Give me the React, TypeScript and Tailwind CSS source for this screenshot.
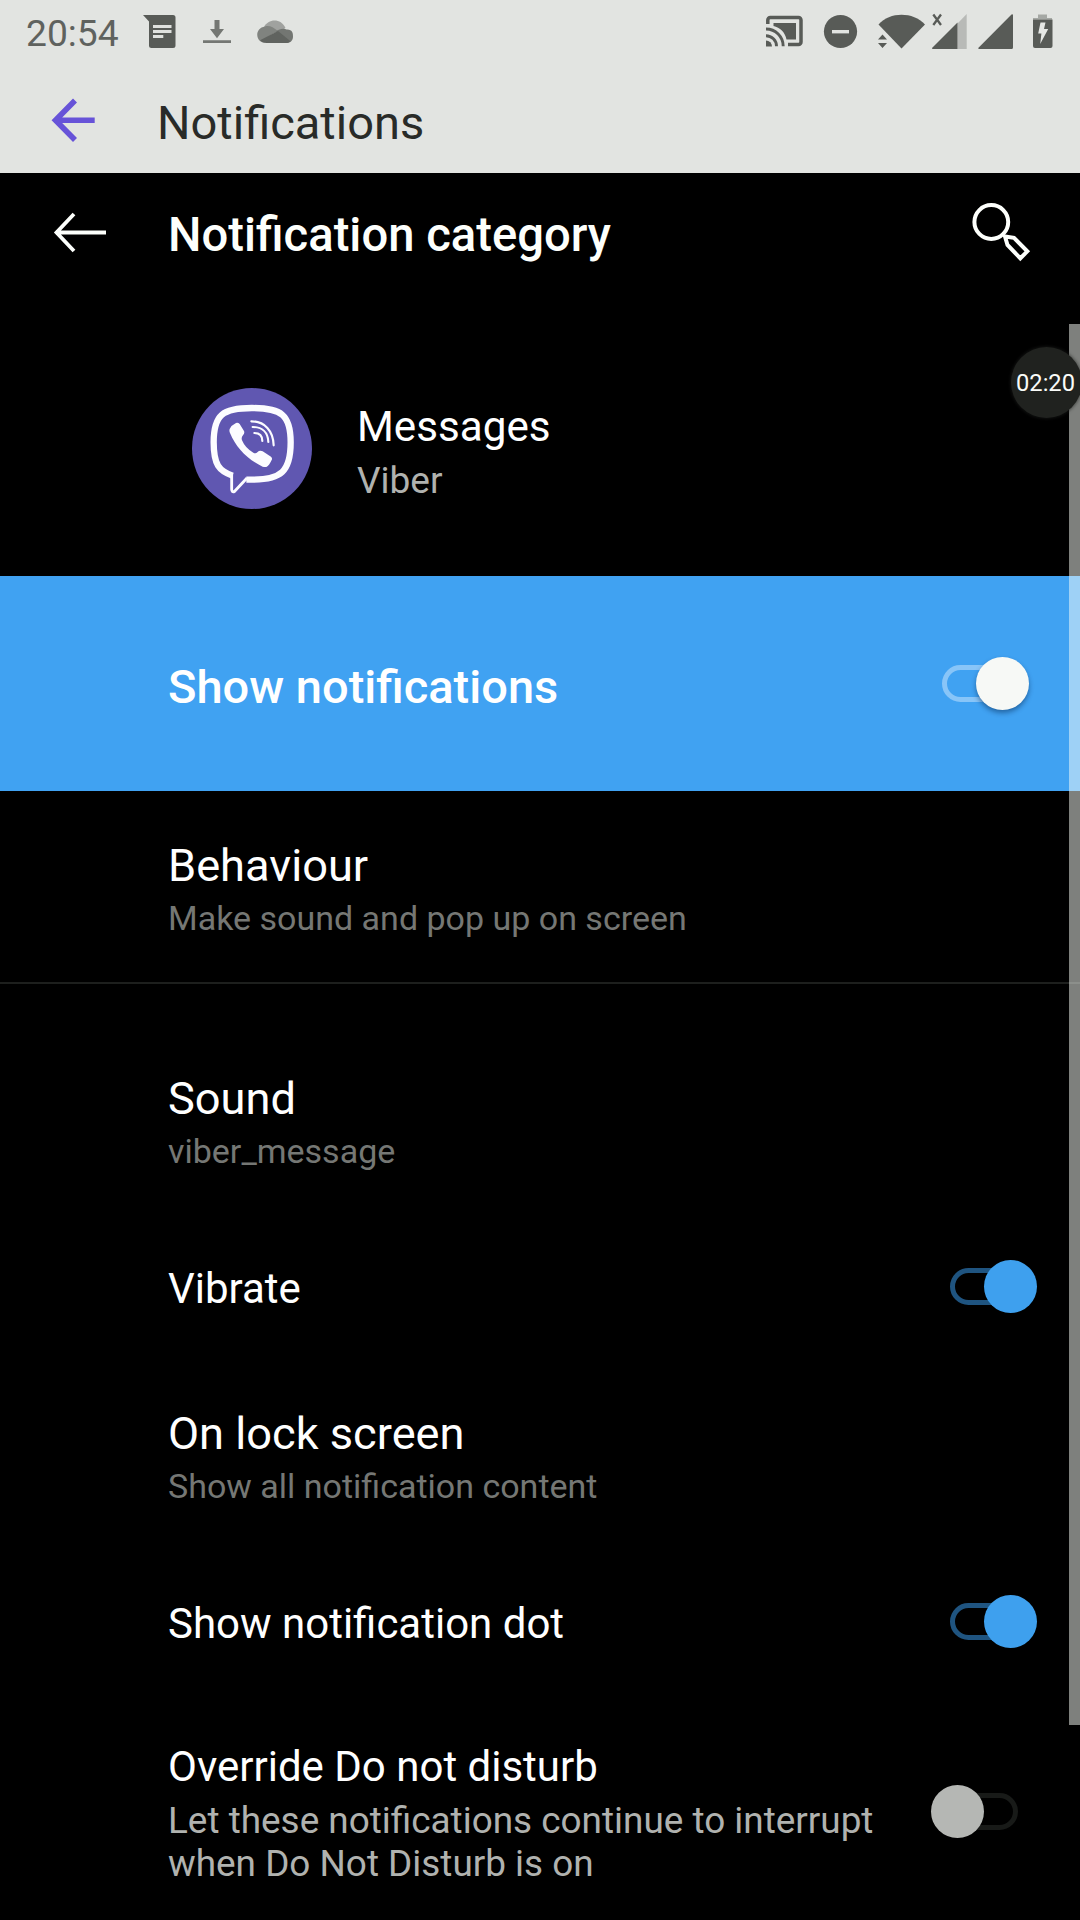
import type { ReactNode } from "react";

function StatusIcon({ x, w, className, children }: { x: number; w: number; className?: string; children: ReactNode }) {
  return (
    <svg width={w} height={60} viewBox={`${x} 0 ${w} 60`} className={className} fill="#585b57">
      {children}
    </svg>
  );
}

function StatusBar() {
  return (
    <div className="flex h-[60px] items-center pr-[27px] pl-[26px]">
      <span className="relative top-[3px] w-[117px] text-[37.200px] leading-[60px] text-[#5f625e]">20:54</span>
      <StatusIcon x={143} w={34}>
        <path d="M143 15H173a2.5 2.5 0 0 1 2.5 2.5V45.5a2.5 2.5 0 0 1-2.5 2.5H151.500a2.500 2.500 0 0 1-2.500-2.500V21.500Z" />
        <path d="M153 25h18.500v3H153zM153 30h18.500v3H153zM153 35h10.300v3H153z" fill="#dfe1de" />
      </StatusIcon>
      <StatusIcon x={203} w={29} className="ml-[26px]">
        <path d="M214.500 20h5v9h4.500l-7 9.300-7-9.300h4.500zM203 40.300h28v2.700h-28z" fill="#747773" />
      </StatusIcon>
      <StatusIcon x={256} w={38} className="ml-[24px]">
        <path d="M264 27C268 18.500 281 17.500 285.500 28L276 34Z" fill="#a0a29f" />
        <path d="M266 43C255 43 254 28 265 26.500C269 25 273 27 278 31L262 40.500Z" fill="#80837f" />
        <path d="M276 31.500C279 28.500 284.500 28 286.500 29.500C292 29 293.200 33 293 36.500C293 40.500 290.500 43 286.500 43Z" fill="#737672" />
        <path d="M260 40.300L278 31L290.500 41.300Q288.500 43 286.500 43H266Q262 43 260 40.300Z" fill="#60635f" />
      </StatusIcon>
      <StatusIcon x={766} w={38} className="ml-auto">
        <path d="M767.800 24V20a2.500 2.500 0 0 1 2.500-2.500H798.500a2.500 2.500 0 0 1 2.500 2.500V42a2.500 2.500 0 0 1-2.500 2.500H788" fill="none" stroke="#585b57" strokeWidth="3.500" />
        <path d="M773.500 23H796V39.500H786.500C785 32 780 27.500 773.500 26Z" />
        <path d="M766 40.500a6 6 0 0 1 6 6h-6Z" />
        <path d="M766 35.700a10.500 10.500 0 0 1 10.500 10.500M766 29a17.200 17.200 0 0 1 17.200 17.200" fill="none" stroke="#585b57" strokeWidth="2.900" />
      </StatusIcon>
      <StatusIcon x={823} w={35} className="ml-[19px]">
        <circle cx="840.500" cy="31.500" r="16.600" />
        <path d="M832 30h17v3.400h-17z" fill="#e2e4e1" />
      </StatusIcon>
      <StatusIcon x={877} w={49} className="ml-[19px]">
        <path d="M878.500 24.500C890 11.500 913 11.500 925 24.500L901.500 48.500Z" />
        <path d="M882.500 34.500l4.500 5h-9zM882.500 48l4.500-5h-9z" />
      </StatusIcon>
      <StatusIcon x={931} w={37} className="ml-[5px]">
        <path d="M966.700 14V49H957.500V23.500Z" fill="#b8bab7" />
        <path d="M957.500 22.500V49H932.500Q931.500 48.500 932.500 47.500Z" />
        <path d="M933.300 14.500L941 25M941 14.500L933.300 25" fill="none" stroke="#585b57" strokeWidth="2.300" />
      </StatusIcon>
      <StatusIcon x={978} w={36} className="ml-[10px]">
        <path d="M1011.500 14.500Q1013 13.500 1013 15.500V47.500Q1013 49 1011.500 49H979Q977.500 48.500 979 47.200Z" />
      </StatusIcon>
      <StatusIcon x={1033} w={20} className="ml-[19px]">
        <path d="M1038 14.500h9v3.500h5v1.500h-19V18h5z" fill="#a5a8a4" />
        <path d="M1033 19.500h19.500V46a2 2 0 0 1-2 2h-15.500a2 2 0 0 1-2-2z" />
        <path d="M1040.500 22.500h5l-1.500 6.500h4.200l-8 15 1.200-10.500h-3.200z" fill="#e6e8e5" />
      </StatusIcon>
    </div>
  );
}

function Toggle({ on, tone, className }: { on: boolean; tone: "white" | "blue" | "gray"; className: string }) {
  const knob = tone === "white" ? "bg-[#f7f9f6] shadow-[0_3px_5px_rgba(0,30,70,0.45)]" : tone === "blue" ? "bg-[#3ea0ee]" : "bg-[#b5b7b4]";
  const track = tone === "white" ? "border-[#88c5f8]" : tone === "blue" ? "border-[#1f5480]" : "border-[#181a18]";
  return (
    <div className={`relative flex h-[53px] w-[87px] items-center ${on ? "justify-start" : "justify-end"} ${className}`}>
      <div className={`h-[37px] w-[75px] rounded-full border-[5px] ${track}`} />
      <div className={`absolute top-0 size-[53px] rounded-full ${on ? "right-0" : "left-0"} ${knob}`} />
    </div>
  );
}

function ViberLogo() {
  return (
    <svg width={120} height={121} viewBox="66 54 360 363">
      <ellipse cx="246" cy="235.500" rx="180" ry="181.500" fill="#6057b1" />
      <path d="M188 317C147 303 131 284 131 217C131 134 158 114 246 114C334 114 362 134 362 217C362 305 333 329 246 329H229" fill="none" stroke="#fcfcff" strokeWidth="19" />
      <path d="M185 312V358Q185 368 194 364L231 324" fill="none" stroke="#fcfcff" strokeWidth="8.500" strokeLinejoin="round" />
      <path d="M179 177Q185 165 198 159Q204 157 209 162L222 183Q225 189 219 196Q213 203 216 211Q226 235 250 248Q257 252 262 247Q269 240 278 244L303 260Q308 265 305 270Q298 286 289 291Q284 292 278 290C232 268 199 234 180 189Q177 182 179 177Z" fill="#fcfcff" />
      <path d="M244 154C284 154 310 183 311 226M248 171C277 171 294 188 295 216M253 189C269 189 277 198 277 213" fill="none" stroke="#fcfcff" strokeWidth="6.500" strokeLinecap="round" />
    </svg>
  );
}

function Title({ children }: { children: ReactNode }) {
  return <div className="text-[45.200px] leading-[54px] text-white">{children}</div>;
}

function Summary({ children }: { children: ReactNode }) {
  return <div className="mt-[4px] text-[34px] leading-[42px] text-[#757774]">{children}</div>;
}

export default function App() {
  return (
    <div className="relative flex h-[1920px] w-[1080px] flex-col overflow-hidden bg-black whitespace-nowrap font-['Roboto',sans-serif]">
      <header className="h-[173px] bg-[#e2e4e1]">
        <StatusBar />
        <div className="flex pl-[50px]">
          <svg width={48} height={48} viewBox="50 96 48 48" className="mt-[36px]" fill="none" stroke="#6753d8" strokeWidth="5.600">
            <path d="M75 100.500L55.500 120.300L75 140M55.500 120.300H94.700" />
          </svg>
          <h1 className="mt-[35px] ml-[59px] text-[47px] leading-[56px] text-[#292b28]">Notifications</h1>
        </div>
      </header>

      <div className="flex h-[127px]">
        <svg width={60} height={48} viewBox="50 208 60 48" className="mt-[35px] ml-[50px]" fill="none" stroke="#fdfffc" strokeWidth="3.800">
          <path d="M74 214L56.500 232.500L74 251M56.500 232.500H106" />
        </svg>
        <h2 className="mt-[34px] ml-[58px] text-[47.200px] leading-[56px] font-medium text-[#fdfffc]">Notification category</h2>
        <svg width={64} height={64} viewBox="968 200 64 64" className="mt-[27px] mr-[48px] ml-auto" fill="none" stroke="#fdfffc" strokeWidth="4">
          <circle cx="991.300" cy="222" r="16.900" />
          <path d="M1005 236.500L1014 237.800L1027.300 251.300L1020.300 258.300L1007.500 245Z" />
        </svg>
      </div>

      <div className="flex h-[276px] pl-[192px]">
        <div className="mt-[88px]">
          <ViberLogo />
        </div>
        <div className="ml-[45px]">
          <div className="mt-[102px] text-[42.200px] leading-[50px] text-white">Messages</div>
          <div className="mt-[7px] text-[37px] leading-[44px] text-[#b0b2af]">Viber</div>
        </div>
      </div>

      <div className="flex h-[215px] items-start bg-[#40a2f2] pl-[168px]">
        <div className="mt-[83px] text-[47px] leading-[56px] font-medium text-white">Show notifications</div>
        <Toggle on tone="white" className="mt-[81px] mr-[51px] ml-auto" />
      </div>

      <div className="h-[193px] border-b-2 border-[#1d1f1d] pt-[48px] pl-[168px]">
        <Title>Behaviour</Title>
        <Summary>Make sound and pop up on screen</Summary>
      </div>

      <div className="h-[226px] pt-[88px] pl-[168px]">
        <Title>Sound</Title>
        <Summary>viber_message</Summary>
      </div>

      <div className="flex h-[154px] items-start pl-[168px]">
        <div className="mt-[54px] text-[42px] leading-[50px] text-white">Vibrate</div>
        <Toggle on tone="blue" className="mt-[50px] mr-[43px] ml-auto" />
      </div>

      <div className="h-[181px] pt-[43px] pl-[168px]">
        <Title>On lock screen</Title>
        <Summary>Show all notification content</Summary>
      </div>

      <div className="flex h-[154px] items-start pl-[168px]">
        <div className="mt-[54px] text-[42px] leading-[50px] text-white">Show notification dot</div>
        <Toggle on tone="blue" className="mt-[50px] mr-[43px] ml-auto" />
      </div>

      <div className="flex h-[221px] items-start pl-[168px]">
        <div className="mt-[43px]">
          <div className="text-[42px] leading-[50px] text-white">Override Do not disturb</div>
          <div className="mt-[7px] text-[36.900px] leading-[43px] text-[#b0b2af]">
            Let these notifications continue to interrupt
            <br />
            when Do Not Disturb is on
          </div>
        </div>
        <Toggle on={false} tone="gray" className="mt-[86px] mr-[62px] ml-auto" />
      </div>

      <div className="absolute top-[324px] right-0 h-[1401px] w-[11px] bg-[#fcfff9]/50" />
      <div className="absolute top-[347px] left-[1011px] flex size-[71px] items-center justify-center rounded-full bg-[#20221f] pt-[2px] pr-[2px] text-[23.700px] text-[#fafcf9] shadow-[0_0_3px_1px_rgba(32,34,31,0.5)]">
        02:20
      </div>
    </div>
  );
}
